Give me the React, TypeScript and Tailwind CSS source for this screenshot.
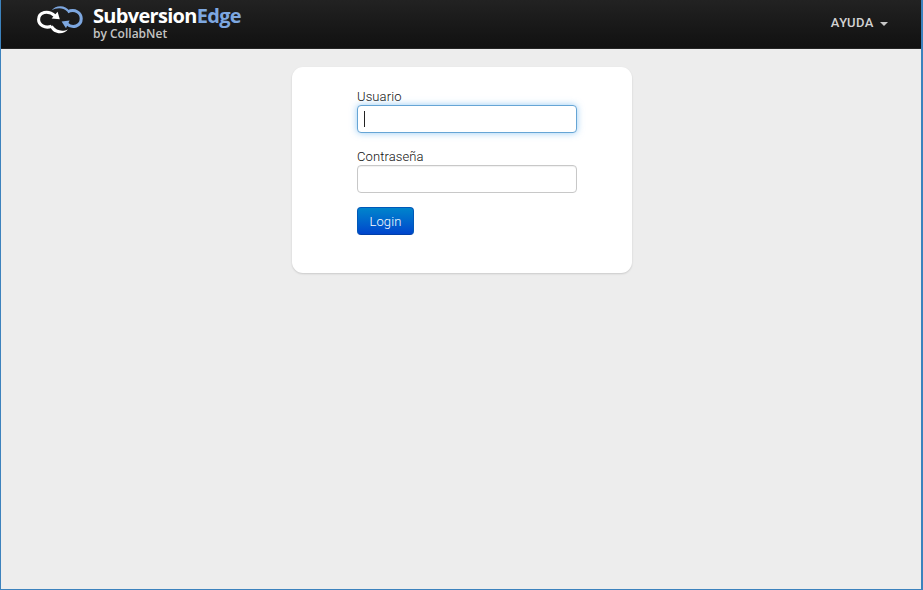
import React from "react";

function CloudLogo() {
  return (
    <svg width="48" height="32" viewBox="0 0 48 32" fill="none" className="shrink-0">
      <path d="M15.5 7.4 C19.5 2 29.5 1.4 33.5 8.2 L31.2 8.4 C27 4.4 20.5 4.6 15.5 7.4 Z" fill="#7da7e0" />
      <path d="M31.6 8.8 C39 5.4 45.2 9.8 45.2 15.6 C45.2 23.2 36.5 26 31 20.8" stroke="#7da7e0" strokeWidth="3.1" />
      <path d="M25.6 18.6 L33.6 17.4 L30 25.2 Z" fill="#7da7e0" />
      <path d="M15.6 23.2 C9 25.8 2.6 22 2.6 16.6 C2.6 9 12 6.6 19 12.8" stroke="#fff" strokeWidth="3.1" />
      <path d="M15.6 15.4 L23.8 16.2 L21.6 8.8 Z" fill="#fff" />
      <path d="M14.2 23.8 C17 31.6 28 32.4 32 26.2 C27.5 28.8 20.5 28.4 16.6 22.6 Z" fill="#fff" />
    </svg>
  );
}

export default function App() {
  return (
    <div className="flex h-[590px] w-[923px] flex-col overflow-hidden border-r-2 border-b border-l border-[#3c82bd] bg-[#ededed] font-[Roboto,sans-serif] text-[13px] text-[#333]">
      <header className="flex h-[49px] shrink-0 items-start justify-between border-b border-[#252525] bg-linear-to-b from-[#222] to-[#111] pr-[33px] pl-[35px]">
        <div className="flex gap-[9px] pt-[3px]">
          <CloudLogo />
          <div className="flex flex-col whitespace-nowrap font-['Open_Sans',sans-serif]">
            <div className="h-[22px] text-[20px] leading-[26px] font-bold tracking-[-0.7px] text-white">
              Subversion<span className="text-[#7da7e0]">Edge</span>
            </div>
            <div className="text-[12px] leading-[17px] font-semibold tracking-[0px] text-[#c4c4c4]">by CollabNet</div>
          </div>
        </div>
        <button className="flex h-[46px] items-center gap-[6px] font-medium text-[#d2d2d2]">
          <span className="text-[13px] tracking-[0.5px]">AYUDA</span>
          <span className="mt-[2px] border-x-4 border-t-4 border-x-transparent border-t-[#c8c8c8]" />
        </button>
      </header>
      <main className="flex justify-center pt-[18px] pl-[2px]">
        <form className="flex h-[206px] w-[340px] flex-col items-start rounded-[11px] bg-white pt-[20px] pl-[65px] shadow-[0_1px_2px_rgba(0,0,0,0.15)]">
          <label className="h-[18px] leading-[20px] font-light tracking-[0.1px] text-[#111]">Usuario</label>
          <div className="flex h-[28px] w-[220px] items-center rounded-[4px] border border-[#66a5d5] bg-white pl-[6px] shadow-[0_0_7px_rgba(82,168,236,0.6)]">
            <span className="h-[16px] w-px bg-[#222]" />
          </div>
          <label className="mt-[14px] h-[18px] leading-[20px] font-light tracking-[0.1px] text-[#111]">Contraseña</label>
          <input className="h-[28px] w-[220px] rounded-[4px] border border-[#c8c8c8] bg-white px-[6px] shadow-[inset_0_1px_1px_rgba(0,0,0,0.06)]" />
          <button type="button" className="mt-[14px] h-[28px] w-[57px] rounded-[4px] border border-[#0058b8] border-b-[#003fa8] bg-linear-to-b from-[#0084cc] to-[#0044cc] pt-px text-[13px] font-light tracking-[0.1px] text-white">
            Login
          </button>
        </form>
      </main>
    </div>
  );
}
